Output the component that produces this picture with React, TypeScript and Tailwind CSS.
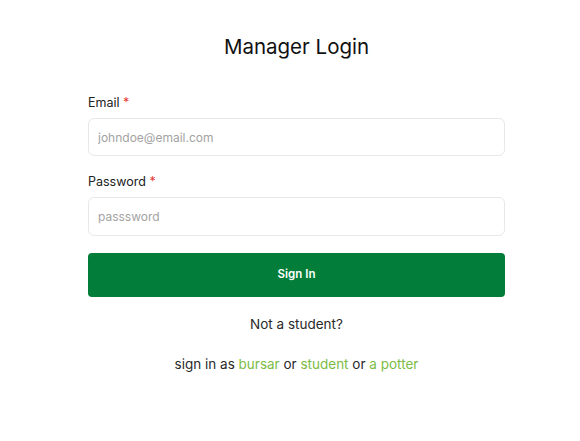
import React, { useState } from 'react';

const App: React.FC = () => {
  const [email, setEmail] = useState('');
  const [password, setPassword] = useState('');

  return (
    <div className="min-h-screen bg-white font-['Inter',sans-serif] text-[#1f1f1f]">
      <div className="ml-[88px] w-[417px] pt-[34px]">
        <h1 className="text-center text-[20.5px] leading-[26px] text-[#111]">Manager Login</h1>

        <form className="mt-[35px]" onSubmit={(e) => e.preventDefault()}>
          <label className="block text-[12.5px] leading-[16px] text-[#222]">
            Email <span className="text-[#e53935]">*</span>
          </label>
          <input
            type="email"
            value={email}
            onChange={(e) => setEmail(e.target.value)}
            placeholder="johndoe@email.com"
            className="mt-[7px] h-[38px] w-full rounded-md border border-[#e8e8e8] px-[9px] text-[12px] placeholder-[#a3a3a3] focus:outline-none"
          />

          <label className="mt-[18px] block text-[12.5px] leading-[16px] text-[#222]">
            Password <span className="text-[#e53935]">*</span>
          </label>
          <input
            type="password"
            value={password}
            onChange={(e) => setPassword(e.target.value)}
            placeholder="passsword"
            className="mt-[7px] h-[39px] w-full rounded-md border border-[#e8e8e8] px-[9px] text-[12px] placeholder-[#a3a3a3] focus:outline-none"
          />

          <button
            type="submit"
            className="mt-[17px] h-[44px] w-full rounded-[4px] bg-[#027d3a] text-[11.5px] font-semibold text-white"
          >
            Sign In
          </button>
        </form>

        <p className="mt-[18px] text-center text-[13.5px] leading-[18px] text-[#2a2a2a]">Not a student?</p>
        <p className="mt-[22px] text-center text-[13.5px] leading-[18px] text-[#2a2a2a]">
          sign in as <a className="text-[#7cbc45]">bursar</a> or{' '}
          <a className="text-[#7cbc45]">student</a> or <a className="text-[#7cbc45]">a potter</a>
        </p>
      </div>
    </div>
  );
};

export default App;
